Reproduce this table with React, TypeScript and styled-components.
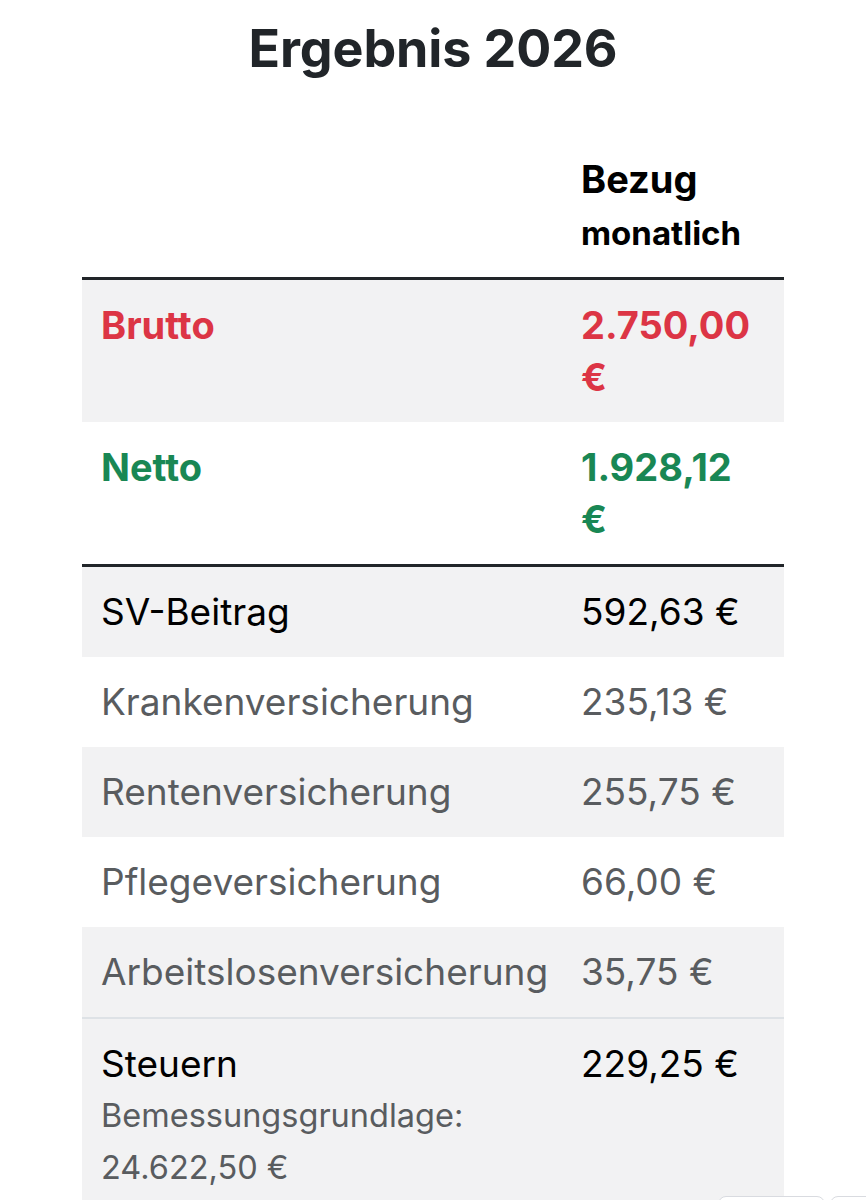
import React from "react";
import styled, { createGlobalStyle } from "styled-components";

const GlobalStyle = createGlobalStyle`
  html, body {
    margin: 0;
    padding: 0;
    background: #ffffff;
  }
  body {
    font-family: Inter, "Noto Sans", "Liberation Sans", sans-serif;
    color: #000;
    overflow: hidden;
  }
`;

const Page = styled.main`
  position: relative;
  width: 866px;
  height: 1200px;
  overflow: hidden;
  display: flex;
  flex-direction: column;
  align-items: center;
`;

const Title = styled.h2`
  margin: 18px 0 0;
  font-family: Inter, "Noto Sans", sans-serif;
  font-size: 52px;
  font-weight: 700;
  line-height: 1.2;
  color: #212529;
  letter-spacing: -0.1px;
`;

const Table = styled.table`
  margin-top: 54px;
  width: 702px;
  border-collapse: collapse;
  table-layout: fixed;
  font-size: 38px;
  line-height: 52px;
`;

const LabelCol = styled.col`
  width: 480px;
`;

const ValueCol = styled.col`
  width: 222px;
`;

const HeadCell = styled.th`
  padding: 19px 19px 18px;
  text-align: left;
  vertical-align: bottom;
  font-weight: 700;
  color: #000;
`;

const HeadSmall = styled.small`
  font-size: 33px;
`;

const Body = styled.tbody<{ $divider?: "thick" | "thin" }>`
  border-top: ${(p) =>
    p.$divider === "thick"
      ? "3px solid #212529"
      : p.$divider === "thin"
      ? "2px solid #dee2e6"
      : "none"};
`;

const Row = styled.tr<{ $striped?: boolean }>`
  background: ${(p) => (p.$striped ? "#f2f2f3" : "#ffffff")};
`;

type Tone = "red" | "green" | "main" | "muted";

const toneColor: Record<Tone, string> = {
  red: "#dc3545",
  green: "#198754",
  main: "#000000",
  muted: "#595c5f",
};

const Cell = styled.td<{ $tone: Tone; $bold?: boolean }>`
  padding: 19px;
  vertical-align: top;
  color: ${(p) => toneColor[p.$tone]};
  font-weight: ${(p) => (p.$bold ? 700 : 400)};
  font-size: ${(p) => (p.$bold ? "38px" : "37px")};
`;

const Note = styled.small`
  display: block;
  font-size: 32.5px;
  color: #595c5f;
`;

const FloatingBar = styled.div`
  position: absolute;
  top: 1196px;
  left: 718px;
  display: flex;
  gap: 5px;
`;

const FloatingButton = styled.div<{ $w: number }>`
  width: ${(p) => p.$w}px;
  height: 40px;
  border: 1px solid #d9dbe0;
  border-radius: 8px;
  background: #fff;
`;

const rows: { label: string; value: string }[] = [
  { label: "Krankenversicherung", value: "235,13 €" },
  { label: "Rentenversicherung", value: "255,75 €" },
  { label: "Pflegeversicherung", value: "66,00 €" },
  { label: "Arbeitslosenversicherung", value: "35,75 €" },
];

export default function App() {
  return (
    <>
      <GlobalStyle />
      <Page>
        <Title>Ergebnis 2026</Title>
        <Table>
          <colgroup>
            <LabelCol />
            <ValueCol />
          </colgroup>
          <thead>
            <tr>
              <HeadCell />
              <HeadCell>
                Bezug <HeadSmall>monatlich</HeadSmall>
              </HeadCell>
            </tr>
          </thead>
          <Body $divider="thick">
            <Row $striped>
              <Cell $tone="red" $bold>
                Brutto
              </Cell>
              <Cell $tone="red" $bold>
                2.750,00 €
              </Cell>
            </Row>
            <Row>
              <Cell $tone="green" $bold>
                Netto
              </Cell>
              <Cell $tone="green" $bold>
                1.928,12 €
              </Cell>
            </Row>
          </Body>
          <Body $divider="thick">
            <Row $striped>
              <Cell $tone="main">SV-Beitrag</Cell>
              <Cell $tone="main">592,63 €</Cell>
            </Row>
            {rows.map((r, i) => (
              <Row key={r.label} $striped={i % 2 === 1}>
                <Cell $tone="muted">{r.label}</Cell>
                <Cell $tone="muted">{r.value}</Cell>
              </Row>
            ))}
          </Body>
          <Body $divider="thin">
            <Row $striped>
              <Cell $tone="main">
                Steuern
                <Note>Bemessungsgrundlage: 24.622,50 €</Note>
              </Cell>
              <Cell $tone="main">229,25 €</Cell>
            </Row>
          </Body>
        </Table>
        <FloatingBar>
          <FloatingButton $w={105} />
          <FloatingButton $w={60} />
        </FloatingBar>
      </Page>
    </>
  );
}
